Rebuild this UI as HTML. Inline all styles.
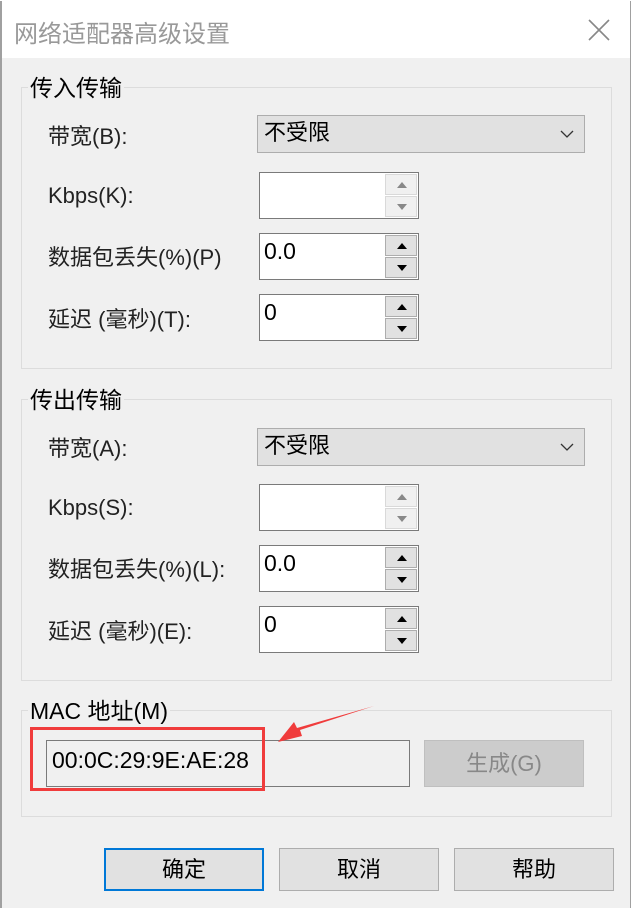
<!DOCTYPE html>
<html><head><meta charset="utf-8"><style>
*{margin:0;padding:0;box-sizing:border-box}
body{width:632px;height:908px;background:#fff;position:relative;overflow:hidden;font-family:"Liberation Sans","Noto Sans CJK SC",sans-serif;color:#000}
.win{position:absolute;left:0;top:1px;width:631px;height:907px;background:#f0f0f0;border-left:2px solid #a0a0a0;border-right:1px solid #a0a0a0}
.title{position:absolute;left:0;top:0;width:100%;height:57px;background:#fff}
.title span{position:absolute;left:12px;top:13px;font-size:24px;color:#999}
.a{position:absolute}
.grp{position:absolute;border:1px solid #dcdcdc}
.lg{position:absolute;background:#f0f0f0;font-size:23px;padding:0 2px;line-height:26px}
.lb{position:absolute;font-size:22px;line-height:26px;color:#222}
.combo{position:absolute;left:257px;width:328px;height:38px;background:#e1e1e1;border:1px solid #adadad;font-size:22px;line-height:34px;padding-left:6px}
.spin{position:absolute;left:259px;width:160px;height:47px;background:#fff;border:1px solid #7a7a7a;font-size:23px;line-height:34px;padding-left:4px}
.sb{position:absolute;right:1px;width:32px;height:21px;border:1px solid #adadad;background:#e1e1e1}
.dis .sb{background:#f0f0f0;border-color:#d9d9d9}
.btn{position:absolute;top:848px;width:160px;height:43px;background:#e1e1e1;border:1px solid #adadad;font-size:22px;text-align:center;line-height:41px}
</style></head><body>
<div class="win">
<div class="title"><span>网络适配器高级设置</span>
<svg class="a" style="left:585px;top:17px" width="24" height="24"><path d="M2 2L22 22M22 2L2 22" stroke="#888" stroke-width="1.6"/></svg></div>
</div>
<div class="grp" style="left:21px;top:87px;width:591px;height:282px"></div>
<div class="lg" style="left:28px;top:75px">传入传输</div>
<div class="lb" style="left:48px;top:124px">带宽(B):</div>
<div class="combo" style="top:115px">不受限<svg class="a" style="right:10px;top:13px" width="14" height="10"><path d="M1 2L7 8L13 2" stroke="#333" fill="none" stroke-width="1.3"/></svg></div>
<div class="lb" style="left:48px;top:183px">Kbps(K):</div>
<div class="spin dis" style="top:172px"><div class="sb" style="top:1px"><svg class="a" style="left:10px;top:6px" width="12" height="8"><path d="M1 7L6 1L11 7Z" fill="#888"/></svg></div><div class="sb" style="top:23px"><svg class="a" style="left:10px;top:6px" width="12" height="8"><path d="M1 1L6 7L11 1Z" fill="#888"/></svg></div></div>
<div class="lb" style="left:48px;top:245px">数据包丢失(%)(P)</div>
<div class="spin" style="top:233px">0.0<div class="sb" style="top:1px"><svg class="a" style="left:10px;top:6px" width="12" height="8"><path d="M1 7L6 1L11 7Z" fill="#000"/></svg></div><div class="sb" style="top:23px"><svg class="a" style="left:10px;top:6px" width="12" height="8"><path d="M1 1L6 7L11 1Z" fill="#000"/></svg></div></div>
<div class="lb" style="left:48px;top:307px">延迟 (毫秒)(T):</div>
<div class="spin" style="top:294px">0<div class="sb" style="top:1px"><svg class="a" style="left:10px;top:6px" width="12" height="8"><path d="M1 7L6 1L11 7Z" fill="#000"/></svg></div><div class="sb" style="top:23px"><svg class="a" style="left:10px;top:6px" width="12" height="8"><path d="M1 1L6 7L11 1Z" fill="#000"/></svg></div></div>

<div class="grp" style="left:21px;top:399px;width:591px;height:282px"></div>
<div class="lg" style="left:28px;top:387px">传出传输</div>
<div class="lb" style="left:48px;top:436px">带宽(A):</div>
<div class="combo" style="top:428px">不受限<svg class="a" style="right:10px;top:13px" width="14" height="10"><path d="M1 2L7 8L13 2" stroke="#333" fill="none" stroke-width="1.3"/></svg></div>
<div class="lb" style="left:48px;top:495px">Kbps(S):</div>
<div class="spin dis" style="top:484px"><div class="sb" style="top:1px"><svg class="a" style="left:10px;top:6px" width="12" height="8"><path d="M1 7L6 1L11 7Z" fill="#888"/></svg></div><div class="sb" style="top:23px"><svg class="a" style="left:10px;top:6px" width="12" height="8"><path d="M1 1L6 7L11 1Z" fill="#888"/></svg></div></div>
<div class="lb" style="left:48px;top:557px">数据包丢失(%)(L):</div>
<div class="spin" style="top:545px">0.0<div class="sb" style="top:1px"><svg class="a" style="left:10px;top:6px" width="12" height="8"><path d="M1 7L6 1L11 7Z" fill="#000"/></svg></div><div class="sb" style="top:23px"><svg class="a" style="left:10px;top:6px" width="12" height="8"><path d="M1 1L6 7L11 1Z" fill="#000"/></svg></div></div>
<div class="lb" style="left:48px;top:619px">延迟 (毫秒)(E):</div>
<div class="spin" style="top:606px">0<div class="sb" style="top:1px"><svg class="a" style="left:10px;top:6px" width="12" height="8"><path d="M1 7L6 1L11 7Z" fill="#000"/></svg></div><div class="sb" style="top:23px"><svg class="a" style="left:10px;top:6px" width="12" height="8"><path d="M1 1L6 7L11 1Z" fill="#000"/></svg></div></div>

<div class="grp" style="left:21px;top:710px;width:591px;height:107px"></div>
<div class="lg" style="left:28px;top:698px">MAC 地址(M)</div>
<div class="a" style="left:46px;top:740px;width:364px;height:47px;border:1px solid #7a7a7a;background:#f0f0f0;font-size:23px;line-height:38px;padding-left:5px">00:0C:29:9E:AE:28</div>
<div class="a" style="left:30px;top:727px;width:235px;height:64px;border:3px solid #f03c3c"></div>
<div class="a" style="left:424px;top:740px;width:160px;height:47px;background:#cccccc;border:1px solid #bfbfbf;font-size:22px;color:#888;text-align:center;line-height:45px">生成(G)</div>
<svg class="a" style="left:270px;top:700px" width="110" height="50"><path d="M104 6L30 30L32 36L8 42L24 22L27 28Z" fill="#f03c3c"/></svg>

<div class="btn" style="left:104px;border:2px solid #0078d7;line-height:39px">确定</div>
<div class="btn" style="left:279px">取消</div>
<div class="btn" style="left:454px">帮助</div>
</body></html>
